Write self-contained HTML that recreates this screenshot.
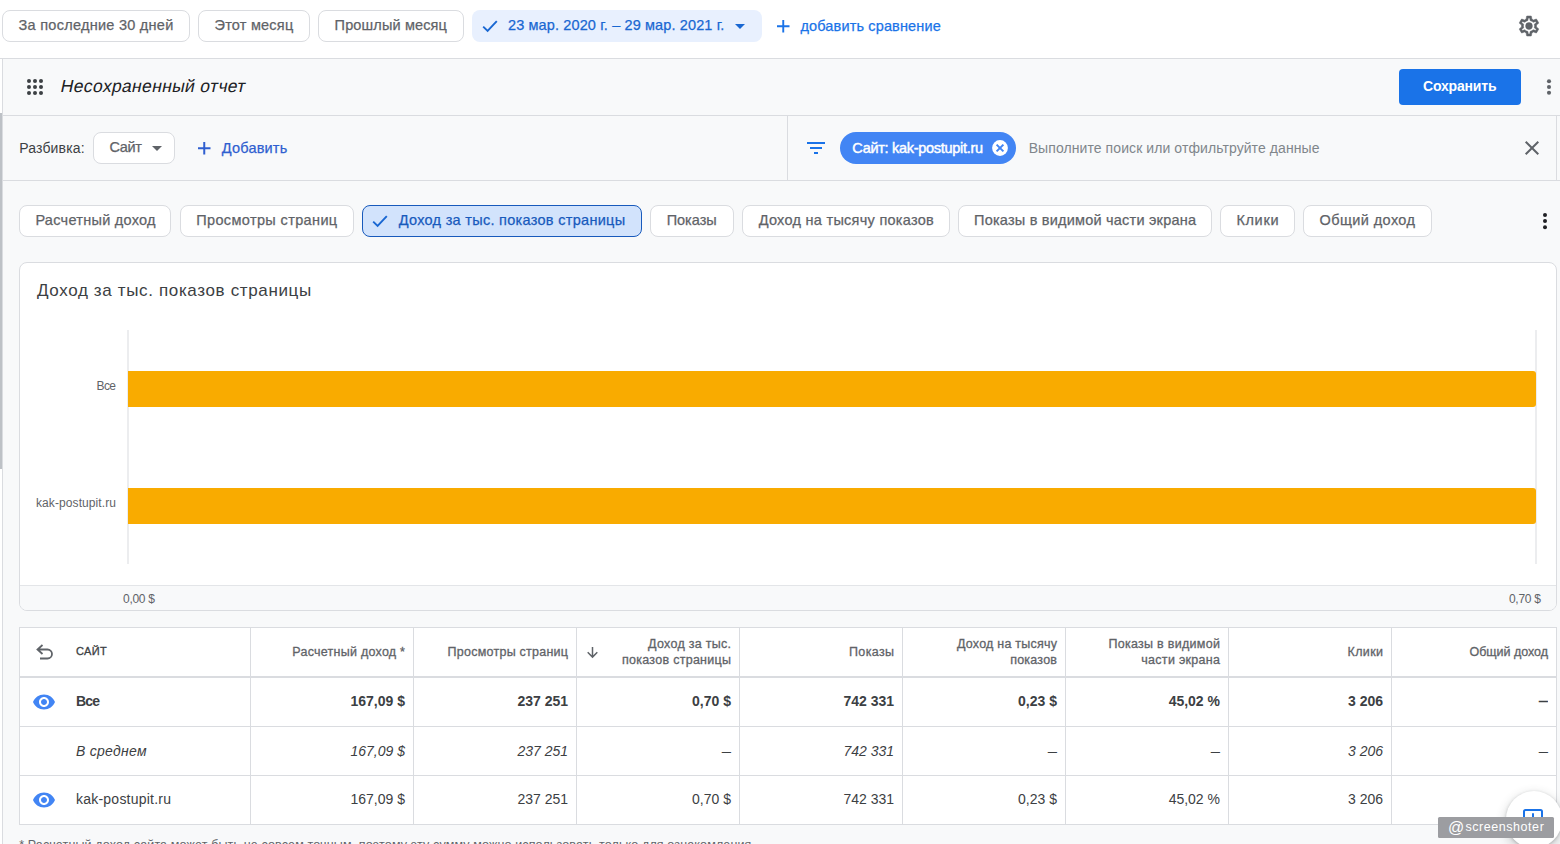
<!DOCTYPE html>
<html lang="ru">
<head>
<meta charset="utf-8">
<title>Несохраненный отчет</title>
<style>
*{box-sizing:border-box;margin:0;padding:0}
html,body{width:1560px;height:844px;overflow:hidden;background:#fff}
body{position:relative;font-family:"Liberation Sans",sans-serif;font-size:14px;color:#3c4043;-webkit-font-smoothing:antialiased}
.abs{position:absolute}
.t{position:absolute;white-space:nowrap;line-height:1}
.md{-webkit-text-stroke:0.25px currentColor}
svg{display:block;position:absolute;overflow:visible}

/* top date bar */
#topbar{position:absolute;left:0;top:0;width:1560px;height:59px;background:#fff;border-bottom:1px solid #dadce0}
.pill{position:absolute;top:10px;height:32px;border:1px solid #dadce0;border-radius:8px;background:#fff;color:#5f6368;font-size:14.5px}
.pill.sel{border:0;background:#e8f0fe;color:#1967d2}

/* left rail */
#rail{position:absolute;left:0;top:59px;width:3px;height:785px;background:#fff;border-right:1px solid #dadce0}
#thumb{position:absolute;left:0;top:113px;width:2px;height:356px;background:#bdc1c6}

/* main panel */
#main{position:absolute;left:3px;top:59px;width:1557px;height:785px;background:#f8f9fa}
.hline{position:absolute;left:0;width:1557px;height:1px;background:#dadce0}
.vline{position:absolute;width:1px;background:#dadce0}

#save{position:absolute;left:1396px;top:10px;width:122px;height:36px;border-radius:4px;background:#1a73e8;color:#fff;font-weight:bold;font-size:14px}
.selbox{position:absolute;left:90px;top:73px;width:82px;height:32px;border:1px solid #dadce0;border-radius:8px;background:#fff}
#fchip{position:absolute;left:837px;top:73px;width:176px;height:32px;border-radius:16px;background:#4285f4;color:#fff}

.chip{position:absolute;top:146px;height:32px;border:1px solid #dadce0;border-radius:8px;background:#fff;color:#5f6368;font-size:14.5px}
.chip.sel{border:1px solid #185abc;background:#d2e3fc;color:#185abc}

#tbl{position:absolute;left:16px;top:568px;width:1538px;border-collapse:separate;border-spacing:0;table-layout:fixed;border-left:1px solid #dadce0;border-top:1px solid #dadce0;background:#fff}
#tbl th,#tbl td{position:relative;width:163px;border-right:1px solid #dadce0;border-bottom:1px solid #dadce0;text-align:right;padding:0 8px 0 0;white-space:nowrap;vertical-align:middle;font-weight:normal}
#tbl th{height:50px;border-bottom:2px solid #dadce0;font-size:12.5px;line-height:16px;color:#5f6368}
#tbl td{height:49px;font-size:14px;color:#3c4043}
#tbl .first{width:231px;text-align:left;padding:0 0 0 56px}
#tbl th:last-child,#tbl td:last-child{width:165px}
#tbl th.first{font-size:11px;color:#3c4043}
#tbl tr.b td{font-weight:bold;color:#3c4043}
#tbl tr.i td{font-style:italic}
#tbl .m{display:inline-block;vertical-align:middle;position:relative;top:-2px}
#tbl th .m{top:0;-webkit-text-stroke:0.3px currentColor}
#tbl th.first .m{top:-2px}
#tbl tr.i .m{top:-1px}
#tbl .dash{transform:scaleX(.66);transform-origin:100% 50%}
#tbl .eye{left:12px;top:12px}
#tbl .undo{left:15.500px;top:16px}
#tbl .sort{left:10px;top:19px}
</style>
</head>
<body>

<div id="topbar">
  <div class="pill" style="left:2px;width:188px"><span class="t md" id="p1" style="left:15.6px;top:7.400px;letter-spacing:0.264px;margin-right:-0.264px">За последние 30 дней</span></div>
  <div class="pill" style="left:198px;width:112px"><span class="t md" id="p2" style="left:15.5px;top:7.400px;letter-spacing:0.215px;margin-right:-0.215px">Этот месяц</span></div>
  <div class="pill" style="left:318px;width:146px"><span class="t md" id="p3" style="left:15.6px;top:7.400px;letter-spacing:0.138px;margin-right:-0.138px">Прошлый месяц</span></div>
  <div class="pill sel" style="left:472px;width:290px">
    <svg style="left:10px;top:9px" width="16" height="14" viewBox="0 0 16 14"><path d="M1.2 7.6 L5.6 12 L14.8 2.2" fill="none" stroke="#1967d2" stroke-width="1.9"/></svg>
    <span class="t md" id="p4" style="left:36px;top:8.400px;letter-spacing:0.124px;margin-right:-0.124px">23 мар. 2020 г. – 29 мар. 2021 г.</span>
    <svg style="left:263px;top:14px" width="10" height="5" viewBox="0 0 10 5"><path d="M0 0h10L5 5z" fill="#1967d2"/></svg>
  </div>
  <svg style="left:776.800px;top:19.700px" width="12.500" height="12.500" viewBox="0 0 12.500 12.500"><path d="M6.250 0v12.500M0 6.250h12.500" stroke="#1a73e8" stroke-width="1.900" fill="none"/></svg>
  <span class="t md" id="p5" style="left:800.4px;top:19px;color:#1a73e8;font-size:14.5px;letter-spacing:0.146px;margin-right:-0.146px">добавить сравнение</span>
  <svg id="gear" style="left:1517px;top:14px" width="24" height="24" viewBox="0 0 24 24"><path fill="#5f6368" d="M19.43 12.98c.04-.32.07-.64.07-.98 0-.34-.03-.66-.07-.98l2.11-1.65c.19-.15.24-.42.12-.64l-2-3.46a.5.5 0 0 0-.61-.22l-2.49 1c-.52-.4-1.08-.73-1.69-.98l-.38-2.65A.488.488 0 0 0 14 2h-4c-.25 0-.46.18-.49.42l-.38 2.65c-.61.25-1.17.59-1.69.98l-2.49-1a.566.566 0 0 0-.18-.03c-.17 0-.34.09-.43.25l-2 3.46c-.13.22-.07.49.12.64l2.11 1.65c-.04.32-.07.65-.07.98 0 .33.03.66.07.98l-2.11 1.65c-.19.15-.24.42-.12.64l2 3.46a.5.5 0 0 0 .61.22l2.49-1c.52.4 1.08.73 1.69.98l.38 2.65c.03.24.24.42.49.42h4c.25 0 .46-.18.49-.42l.38-2.65c.61-.25 1.17-.59 1.69-.98l2.49 1c.06.02.12.03.18.03.17 0 .34-.09.43-.25l2-3.46c.12-.22.07-.49-.12-.64l-2.11-1.65zm-1.98-1.71c.04.31.05.52.05.73 0 .21-.02.43-.05.73l-.14 1.13.89.7 1.08.84-.7 1.21-1.27-.51-1.04-.42-.9.68c-.43.32-.84.56-1.25.73l-1.06.43-.16 1.13-.2 1.35h-1.4l-.19-1.35-.16-1.13-1.06-.43c-.43-.18-.83-.41-1.23-.71l-.91-.7-1.06.43-1.27.51-.7-1.21 1.08-.84.89-.7-.14-1.13c-.03-.31-.05-.54-.05-.74s.02-.43.05-.73l.14-1.13-.89-.7-1.08-.84.7-1.21 1.27.51 1.04.42.9-.68c.43-.32.84-.56 1.25-.73l1.06-.43.16-1.13.2-1.35h1.39l.19 1.35.16 1.13 1.06.43c.43.18.83.41 1.23.71l.91.7 1.06-.43 1.27-.51.7 1.21-1.07.85-.89.7.14 1.13zM12 8.600a3.400 3.400 0 1 0 0 6.800a3.400 3.400 0 1 0 0-6.800z" stroke="#5f6368" stroke-width="0.5" stroke-linejoin="round"/></svg>
</div>

<div id="rail"><div id="thumb" style="top:54px"></div></div>

<div id="main">
  <!-- report header : page y = 59 + local y -->
  <svg style="left:24px;top:20px" width="16" height="16" viewBox="0 0 16 16" fill="#3c4043"><circle cx="2" cy="2" r="2"/><circle cx="8" cy="2" r="2"/><circle cx="14" cy="2" r="2"/><circle cx="2" cy="8" r="2"/><circle cx="8" cy="8" r="2"/><circle cx="14" cy="8" r="2"/><circle cx="2" cy="14" r="2"/><circle cx="8" cy="14" r="2"/><circle cx="14" cy="14" r="2"/></svg>
  <span class="t" id="title" style="left:56px;top:19px;font-size:17.500px;color:#202124;display:inline-block;transform:skewX(-12deg);transform-origin:0 100%;letter-spacing:0.33px">Несохраненный отчет</span>
  <div id="save"><span class="t" id="savet" style="left:24px;top:10px;letter-spacing:-0.171px;margin-right:0.171px">Сохранить</span></div>
  <svg style="left:1544px;top:20px" width="4" height="16" viewBox="0 0 4 16" fill="#5f6368"><circle cx="2" cy="2.300" r="2.050"/><circle cx="2" cy="8" r="2.050"/><circle cx="2" cy="13.700" r="2.050"/></svg>
  <div class="hline" style="top:56px"></div>

  <!-- breakdown / filter row -->
  <span class="t" id="razb" style="left:16.2px;top:82px;color:#3c4043;letter-spacing:0.155px;margin-right:-0.155px">Разбивка:</span>
  <div class="selbox">
    <span class="t md" id="site" style="left:15.5px;top:7px;color:#5f6368;font-size:14.5px;letter-spacing:-0.384px;margin-right:0.384px">Сайт</span>
    <svg style="left:58px;top:13px" width="10" height="5" viewBox="0 0 10 5"><path d="M0 0h10L5 5z" fill="#5f6368"/></svg>
  </div>
  <svg style="left:194.600px;top:82.800px" width="12.500" height="12.500" viewBox="0 0 12.500 12.500"><path d="M6.250 0v12.500M0 6.250h12.500" stroke="#2f5fd0" stroke-width="2" fill="none"/></svg>
  <span class="t md" id="addt" style="left:218.8px;top:81.500px;color:#2f5fd0;font-size:14.5px;letter-spacing:0.187px;margin-right:-0.187px">Добавить</span>
  <div class="vline" style="left:784px;top:57px;height:64px"></div>
  <svg style="left:804px;top:83px" width="18" height="12" viewBox="0 0 18 12" fill="#1a73e8"><rect x="0" y="0" width="18" height="2"/><rect x="3" y="5" width="12" height="2"/><rect x="7" y="10" width="4" height="2"/></svg>
  <div id="fchip">
    <span class="t" id="fchipt" style="left:12.3px;top:8.500px;font-size:14.5px;-webkit-text-stroke:0.45px #fff;letter-spacing:-0.295px;margin-right:0.295px">Сайт: kak-postupit.ru</span>
    <svg style="left:151.500px;top:8.400px" width="16" height="16" viewBox="0 0 16 16"><circle cx="8" cy="8" r="7.900" fill="#fff"/><path d="M4.600 4.600l6.800 6.800M11.400 4.600l-6.800 6.800" stroke="#4285f4" stroke-width="2" fill="none"/></svg>
  </div>
  <span class="t" id="ph" style="left:1025.7px;top:82px;color:#80868b;letter-spacing:0.082px;margin-right:-0.082px">Выполните поиск или отфильтруйте данные</span>
  <svg style="left:1522px;top:82px" width="14" height="14" viewBox="0 0 14 14"><path d="M0.7 0.7l12.600 12.600M13.300 0.700l-12.600 12.600" stroke="#5f6368" stroke-width="2" fill="none"/></svg>
  <div class="vline" style="left:1553px;top:57px;height:64px"></div>
  <div class="hline" style="top:121px"></div>

  <!-- metric chips -->
  <div class="chip" style="left:16px;width:152px"><span class="t md" id="c1" style="left:15.4px;top:7.400px;letter-spacing:0.275px;margin-right:-0.275px">Расчетный доход</span></div>
  <div class="chip" style="left:177px;width:174px"><span class="t md" id="c2" style="left:15.2px;top:7.400px;letter-spacing:0.368px;margin-right:-0.368px">Просмотры страниц</span></div>
  <div class="chip sel" style="left:359px;width:280px">
    <svg style="left:9.200px;top:8px" width="16" height="14" viewBox="0 0 16 14"><path d="M1.2 7.6 L5.6 12 L14.8 2.2" fill="none" stroke="#1967d2" stroke-width="1.9"/></svg>
    <span class="t md" id="c3" style="left:35.7px;top:7.400px;letter-spacing:0.292px;margin-right:-0.292px">Доход за тыс. показов страницы</span>
  </div>
  <div class="chip" style="left:647px;width:84px"><span class="t md" id="c4" style="left:15.7px;top:7.400px;letter-spacing:-0.025px;margin-right:0.025px">Показы</span></div>
  <div class="chip" style="left:739px;width:208px"><span class="t md" id="c5" style="left:15.7px;top:7.400px;letter-spacing:0.275px;margin-right:-0.275px">Доход на тысячу показов</span></div>
  <div class="chip" style="left:955px;width:254px"><span class="t md" id="c6" style="left:15px;top:7.400px;letter-spacing:0.214px;margin-right:-0.214px">Показы в видимой части экрана</span></div>
  <div class="chip" style="left:1217px;width:75px"><span class="t md" id="c7" style="left:15.4px;top:7.400px;letter-spacing:0.662px;margin-right:-0.662px">Клики</span></div>
  <div class="chip" style="left:1300px;width:129px"><span class="t md" id="c8" style="left:15.5px;top:7.400px;letter-spacing:0.409px;margin-right:-0.409px">Общий доход</span></div>
  <svg style="left:1540px;top:154px" width="4" height="16" viewBox="0 0 4 16" fill="#202124"><circle cx="2" cy="2" r="2"/><circle cx="2" cy="8.100" r="2"/><circle cx="2" cy="14.200" r="2"/></svg>

  <div id="card" style="position:absolute;left:16px;top:203px;width:1538px;height:349px;border:1px solid #dadce0;border-radius:8px;background:#fff;overflow:hidden">
    <span class="t" id="ctitle" style="left:17px;top:18.600px;font-size:17px;color:#3c4043;letter-spacing:0.644px;margin-right:-0.644px">Доход за тыс. показов страницы</span>
    <div class="abs" style="left:107px;top:67px;width:2px;height:234px;background:#ecedef"></div>
    <div class="abs" style="left:1515px;top:67px;width:2px;height:234px;background:#ecedef"></div>
    <div class="abs bar" style="left:108px;top:108px;width:1408px;height:36px;background:#f9ab00;border-radius:0 3px 3px 0"></div>
    <div class="abs bar" style="left:108px;top:225px;width:1408px;height:36px;background:#f9ab00;border-radius:0 3px 3px 0"></div>
    <span class="t" id="yl1" style="right:1440px;top:117px;font-size:12px;color:#5f6368;letter-spacing:-0.544px;margin-right:0.544px">Все</span>
    <span class="t" id="yl2" style="right:1440px;top:234px;font-size:12px;color:#5f6368;letter-spacing:0.093px;margin-right:-0.093px">kak-postupit.ru</span>
    <div class="abs" style="left:0;top:322px;width:1536px;height:1px;background:#e3e5e8"></div>
    <div class="abs" style="left:0;top:323px;width:1536px;height:24px;background:#f8f9fa"></div>
    <span class="t" id="xl1" style="left:103px;top:330px;font-size:12px;color:#5f6368;letter-spacing:-0.275px;margin-right:0.275px">0,00 $</span>
    <span class="t" id="xl2" style="right:15px;top:330px;font-size:12px;color:#5f6368;letter-spacing:-0.255px;margin-right:0.255px">0,70 $</span>
  </div>
  <table id="tbl">
    <thead><tr><th class="first"><svg class="undo" width="18" height="16" viewBox="0 0 18 16"><path d="M6.500 1 L1.500 5.500 L6.500 10 M1.800 5.500 H11.500 A4.500 4.500 0 0 1 11.500 14.500 H4" fill="none" stroke="#5f6368" stroke-width="1.800"/></svg><span class="m" id="h0" style="letter-spacing:0.343px;margin-right:-0.343px">САЙТ</span></th><th><span class="m" id="h1" style="letter-spacing:0.255px;margin-right:-0.255px">Расчетный доход *</span></th><th><span class="m" id="h2" style="letter-spacing:0.246px;margin-right:-0.246px">Просмотры страниц</span></th><th><svg class="sort" width="11" height="11" viewBox="0 0 11 11"><path d="M5.500 0v10M0.700 5.300l4.800 4.800 4.800-4.800" fill="none" stroke="#5f6368" stroke-width="1.500"/></svg><span class="m" id="h3" style="letter-spacing:0.277px;margin-right:-0.277px">Доход за тыс.<br>показов страницы</span></th><th><span class="m" id="h4" style="letter-spacing:0.356px;margin-right:-0.356px">Показы</span></th><th><span class="m" id="h5" style="letter-spacing:0.229px;margin-right:-0.229px">Доход на тысячу<br>показов</span></th><th><span class="m" id="h6" style="letter-spacing:0.291px;margin-right:-0.291px">Показы в видимой<br>части экрана</span></th><th><span class="m" id="h7" style="letter-spacing:0.371px;margin-right:-0.371px">Клики</span></th><th><span class="m" id="h8" style="letter-spacing:-0.03px;margin-right:0.03px">Общий доход</span></th></tr></thead>
    <tbody>
    <tr class="b"><td class="first"><svg class="eye" width="24" height="24" viewBox="0 0 24 24"><path fill="#4285f4" d="M12 4.500C7 4.500 2.730 7.610 1 12c1.730 4.390 6 7.500 11 7.500s9.270-3.110 11-7.500c-1.730-4.390-6-7.500-11-7.500zM12 17c-2.760 0-5-2.240-5-5s2.240-5 5-5 5 2.240 5 5-2.240 5-5 5zm0-8c-1.660 0-3 1.340-3 3s1.340 3 3 3 3-1.340 3-3-1.340-3-3-3z"/></svg><span class="m" id="a0" style="letter-spacing:-0.844px;margin-right:0.844px">Все</span></td><td><span class="m" id="a1">167,09 $</span></td><td><span class="m" id="a2">237 251</span></td><td><span class="m" id="a3">0,70 $</span></td><td><span class="m" id="a4">742 331</span></td><td><span class="m" id="a5">0,23 $</span></td><td><span class="m" id="a6">45,02 %</span></td><td><span class="m" id="a7">3 206</span></td><td><span class="m dash" id="a8">—</span></td></tr>
    <tr class="i"><td class="first"><span class="m" id="b0" style="letter-spacing:0.273px;margin-right:-0.273px">В среднем</span></td><td><span class="m" id="b1">167,09 $</span></td><td><span class="m" id="b2">237 251</span></td><td><span class="m dash" id="b3">—</span></td><td><span class="m" id="b4">742 331</span></td><td><span class="m dash" id="b5">—</span></td><td><span class="m dash" id="b6">—</span></td><td><span class="m" id="b7">3 206</span></td><td><span class="m dash" id="b8">—</span></td></tr>
    <tr><td class="first"><svg class="eye" width="24" height="24" viewBox="0 0 24 24"><path fill="#4285f4" d="M12 4.500C7 4.500 2.730 7.610 1 12c1.730 4.390 6 7.500 11 7.500s9.270-3.110 11-7.500c-1.730-4.390-6-7.500-11-7.500zM12 17c-2.760 0-5-2.240-5-5s2.240-5 5-5 5 2.240 5 5-2.240 5-5 5zm0-8c-1.660 0-3 1.340-3 3s1.340 3 3 3 3-1.340 3-3-1.340-3-3-3z"/></svg><span class="m" id="d0" style="letter-spacing:0.227px;margin-right:-0.227px">kak-postupit.ru</span></td><td><span class="m" id="d1">167,09 $</span></td><td><span class="m" id="d2">237 251</span></td><td><span class="m" id="d3">0,70 $</span></td><td><span class="m" id="d4">742 331</span></td><td><span class="m" id="d5">0,23 $</span></td><td><span class="m" id="d6">45,02 %</span></td><td><span class="m" id="d7">3 206</span></td><td><span class="m" id="d8"></span></td></tr>
    </tbody>
  </table>
  <span class="t" id="foot" style="left:16.2px;top:780px;font-size:12.5px;color:#5f6368;letter-spacing:0.139px;margin-right:-0.139px">* Расчетный доход сайта может быть не совсем точным, поэтому эту сумму можно использовать только для ознакомления.</span>
</div>
<div id="fab" style="position:absolute;left:1505.500px;top:791px;width:56.500px;height:56.500px;border-radius:50%;background:#fff;box-shadow:0 1px 3px rgba(60,64,67,.3),0 4px 8px 3px rgba(60,64,67,.15)">
  <svg style="left:17.500px;top:18px" width="20" height="20" viewBox="0 0 20 20"><rect x="1" y="1" width="18" height="16" rx="1.500" fill="none" stroke="#1a73e8" stroke-width="2"/><path d="M10 4.200v6" stroke="#1a73e8" stroke-width="2"/></svg>
</div>
<div id="wm" style="position:absolute;left:1438px;top:817px;width:116px;height:21px;border-radius:1.500px;background:#9c9da1;color:#fff"><span class="t" id="wma" style="left:9.9px;top:3px;font-size:16px;letter-spacing:0px;margin-right:0px">@</span><span class="t" id="wmt" style="left:27.400px;top:4px;font-size:12.500px;letter-spacing:0.558px;margin-right:-0.558px">screenshoter</span></div>
</body>
</html>
